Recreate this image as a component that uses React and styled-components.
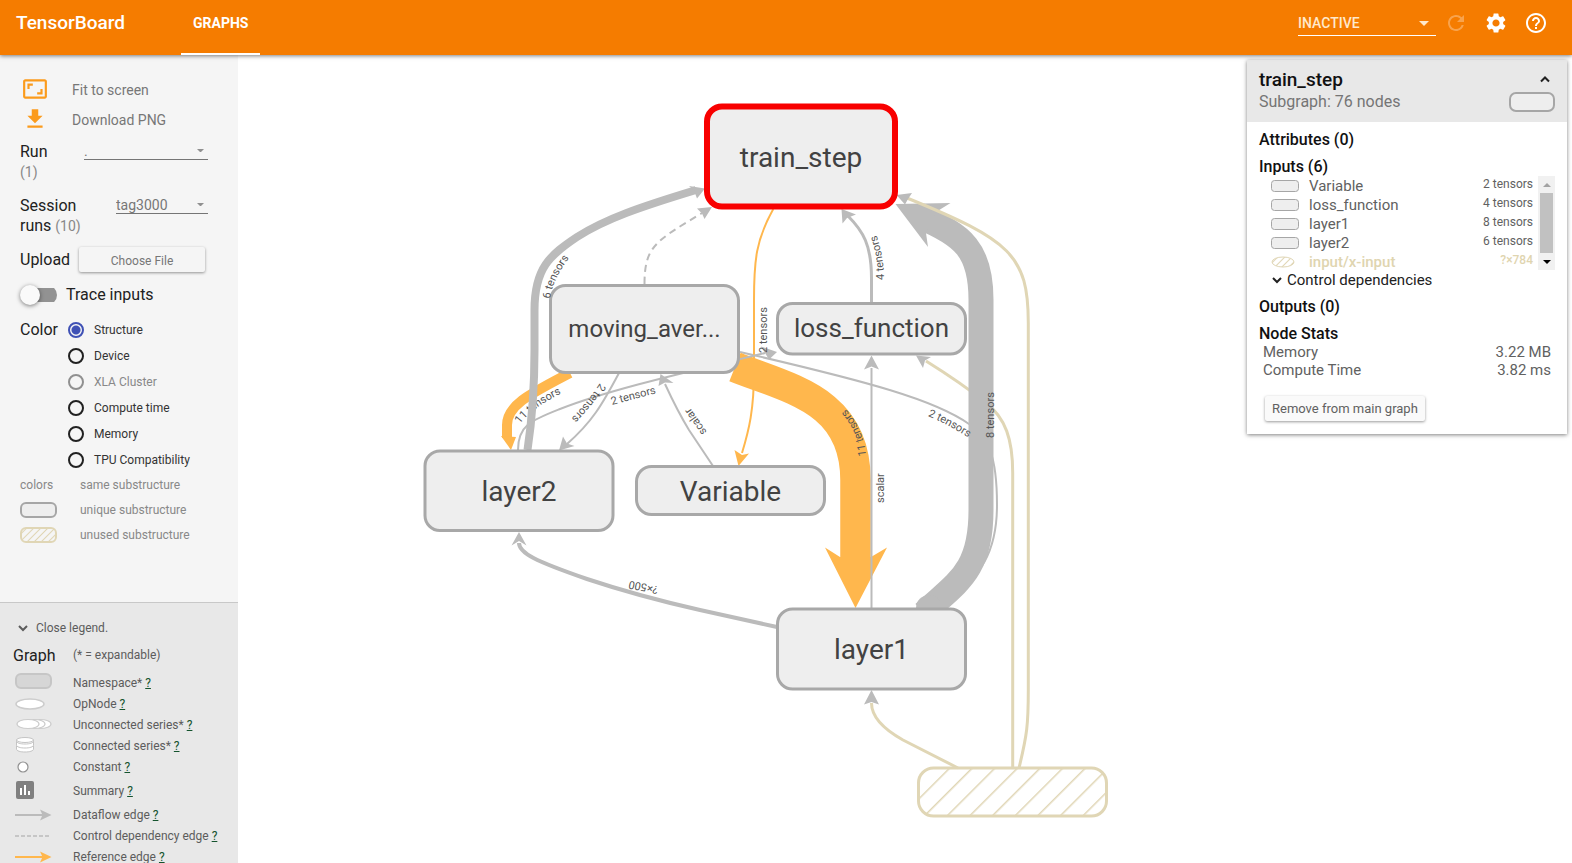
import React from "react";
import styled, { createGlobalStyle, css } from "styled-components";
import {
  MdAspectRatio,
  MdFileDownload,
  MdSettings,
  MdHelpOutline,
  MdRefresh,
} from "react-icons/md";

const GlobalStyle = createGlobalStyle`
  *, *::before, *::after { box-sizing: border-box; }
  body { margin: 0; background: #fff; }
  body, button, select, input { font-family: Roboto, "Liberation Sans", sans-serif; }
  button { border: 0; padding: 0; background: none; cursor: pointer; text-align: left; }
  h1, h2, h3, p, ul { margin: 0; padding: 0; }
  ul { list-style: none; }
`;

/* ---------- shell ---------- */

const Page = styled.div`
  display: flex;
  flex-direction: column;
  height: 100vh;
  overflow: hidden;
`;

const Toolbar = styled.header`
  position: relative;
  z-index: 2;
  flex: none;
  display: flex;
  height: 55px;
  padding: 0 24px 0 16px;
  background: #f57c00;
  color: #fff;
  box-shadow: 0 1px 4px rgba(0, 0, 0, 0.5);
`;

const Brand = styled.h1`
  width: 165px;
  font-size: 19px;
  line-height: 46px;
  font-weight: 500;
`;

const Tab = styled.button`
  padding: 0 12px 8px;
  border-bottom: 2px solid #fff;
  color: #fff;
  font-size: 14px;
  font-weight: 700;
`;

const ToolbarActions = styled.div`
  display: flex;
  align-items: flex-start;
  gap: 16px;
  margin-left: auto;
  padding-top: 11px;
`;

const IconButton = styled.button`
  display: flex;
  color: #fff;
  opacity: ${(p) => (p.disabled ? 0.3 : 1)};
`;

const SelectFrame = styled.span`
  display: grid;
  flex: ${(p) => (p.$width ? "none" : "1")};
  width: ${(p) => (p.$width ? p.$width + "px" : "auto")};
  height: ${(p) => (p.$width ? "25px" : "18px")};
  margin-right: ${(p) => (p.$width ? "-8px" : "0")};
  border-bottom: 1px solid ${(p) => p.$line};
  color: ${(p) => p.$ink};
  select, svg { grid-area: 1 / 1; }
  select {
    appearance: none;
    width: 100%;
    padding: 0;
    border: 0;
    background: none;
    color: inherit;
    font-size: 14px;
    font-weight: ${(p) => (p.$width ? 500 : 400)};
  }
  svg {
    place-self: center end;
    margin-right: ${(p) => (p.$width ? "7px" : "4px")};
    opacity: ${(p) => (p.$width ? 1 : 0.8)};
    pointer-events: none;
  }
`;

const Body = styled.div`
  flex: 1;
  min-height: 0;
  display: flex;
`;

/* ---------- sidebar ---------- */

const Sidebar = styled.aside`
  flex: none;
  display: flex;
  flex-direction: column;
  width: 238px;
  overflow: hidden;
  background: #f5f5f5;
`;

const Controls = styled.section`
  flex: none;
  padding: 20px 30px 55px 20px;
  color: #212121;
`;

const ActionButton = styled.button`
  display: grid;
  grid-template-columns: 50px 1fr;
  align-items: center;
  width: 100%;
  height: 30px;
  padding-left: 2px;
  color: #777;
  font-size: 14px;
  svg { color: #fb9b1c; margin-bottom: 2px; }
`;

const Field = styled.div`
  display: flex;
  align-items: ${(p) => (p.$center ? "center" : "flex-start")};
  margin-top: ${(p) => p.$gap}px;
`;

const FieldLabel = styled.label`
  flex: none;
  width: ${(p) => (p.$width ? p.$width + "px" : "auto")};
  font-size: 16px;
  line-height: 20px;
  small { color: #888; font-size: 14px; }
`;

const RaisedButton = styled.button`
  height: 25px;
  border-radius: 2px;
  background: ${(p) => (p.$light ? "#fafafa" : "#f5f5f5")};
  box-shadow: 0 1px 3px rgba(0, 0, 0, 0.4);
  color: ${(p) => (p.$light ? "#616161" : "#777")};
  font-size: ${(p) => (p.$light ? "13px" : "12px")};
  text-align: center;
  ${(p) => (p.$light ? css`padding: 0 7px; margin: 17px 0 0 6px;` : css`flex: 1; padding-top: 3px; margin: 0 3px 0 9px;`)}
`;

const Toggle = styled.input`
  appearance: none;
  display: flex;
  align-items: center;
  width: 37px;
  height: 20px;
  margin: 0 9px 0 0;
  background: linear-gradient(90deg, transparent 10px, #929292 10px) center / 37px 14px no-repeat;
  border-radius: 10px;
  &::before {
    content: "";
    width: 20px;
    height: 20px;
    border-radius: 50%;
    background: #fafafa;
    box-shadow: 0 1px 4px rgba(0, 0, 0, 0.5);
  }
`;

const ColorGroup = styled.fieldset`
  display: grid;
  grid-template-columns: 48px 1fr;
  margin: 12px 0 0;
  padding: 0;
  border: 0;
`;

const GroupTitle = styled.span`
  font-size: 16px;
  line-height: 26px;
`;

const RadioRow = styled.label`
  display: flex;
  align-items: center;
  gap: 10px;
  height: 26px;
  color: ${(p) => (p.$off ? "#888" : "#333")};
  font-size: 12px;
`;

const Radio = styled.input`
  appearance: none;
  width: 16px;
  height: 16px;
  margin: 0;
  border: 2px solid #212121;
  border-radius: 50%;
  &:checked { border-color: #3f51b5; background: radial-gradient(#3f51b5 4px, transparent 5px); }
  &:disabled { border-color: #909090; }
`;

const SwatchList = styled.ul`
  && { margin-top: -1px; }
`;

const SwatchRow = styled.li`
  display: grid;
  grid-template-columns: 60px 1fr;
  align-items: center;
  height: 25px;
  color: #888;
  font-size: 12px;
`;

const Legend = styled.section`
  flex: 1 0 auto;
  padding: 15px 0 0 13px;
  border-top: 1px solid #c8c8c8;
  background: #e8e8e8;
  color: #5c5c5c;
  font-size: 12px;
`;

const LegendToggle = styled.button`
  display: flex;
  align-items: center;
  gap: 8px;
  height: 20px;
  padding-left: 5px;
  color: #5c5c5c;
  font-size: 12px;
`;

const LegendHead = styled.div`
  display: grid;
  grid-template-columns: 60px 1fr;
  align-items: center;
  height: 20px;
  margin: 7px 0;
  h2 { color: #212121; font-size: 16px; font-weight: 400; }
`;

const LegendRow = styled.li`
  display: grid;
  grid-template-columns: 60px 1fr;
  align-items: center;
  height: ${(p) => (p.$tall ? 27 : 21)}px;
  a { color: #14532d; }
`;

/* ---------- canvas ---------- */

const Canvas = styled.main`
  position: relative;
  flex: 1;
  min-width: 0;
`;

const GraphSvg = styled.svg`
  display: block;
  width: 100%;
  height: 100%;
  font-family: Roboto, "Liberation Sans", sans-serif;
`;

/* ---------- info card ---------- */

const Card = styled.section`
  position: absolute;
  top: 5px;
  right: 5px;
  width: 320px;
  padding-bottom: 13px;
  background: #fff;
  box-shadow: 0 1px 4px rgba(0, 0, 0, 0.5);
`;

const CardHead = styled.header`
  display: flex;
  justify-content: space-between;
  height: 62px;
  padding: 9px 12px 0;
  background: #e8e8e8;
  h2 { font-size: 19px; line-height: 22px; font-weight: 500; color: #111; }
  p { font-size: 16px; line-height: 22px; color: #757575; }
`;

const CardAside = styled.div`
  display: flex;
  flex-direction: column;
  align-items: flex-end;
  gap: 3px;
  button { display: grid; place-items: center; width: 20px; height: 20px; color: #212121; }
`;

const CardBody = styled.div`
  padding: 7px 12px 0;
  color: #212121;
`;

const SectionTitle = styled.h3`
  margin-bottom: ${(p) => (p.$tight ? 0 : 5)}px;
  color: #111;
  font-size: 16px;
  line-height: 22px;
  font-weight: 500;
`;

const InputsArea = styled.div`
  display: flex;
  height: 94px;
  margin-top: -2px;
  overflow: hidden;
`;

const InputList = styled.ul`
  flex: 1;
`;

const InputRow = styled.li`
  display: grid;
  grid-template-columns: 38px 1fr auto;
  height: 19px;
  padding: 0 5px 0 12px;
  color: ${(p) => (p.$unused ? "#dfd5b0" : "#616161")};
  font-weight: ${(p) => (p.$unused ? 500 : 400)};
  font-size: 15px;
  line-height: 20px;
  svg { margin-top: 4px; }
  small { font-size: 12px; line-height: 16px; }
`;

const ScrollTrack = styled.div`
  display: flex;
  flex-direction: column;
  justify-content: space-between;
  width: 17px;
  background: #f1f1f1;
  button { display: grid; place-items: center; height: 17px; }
`;

const ScrollThumb = styled.div`
  flex: 1;
  margin: 0 2px;
  background: #c1c1c1;
`;

const DependenciesButton = styled.button`
  display: flex;
  align-items: center;
  gap: 5px;
  height: 20px;
  margin-bottom: 6px;
  padding-left: 13px;
  color: #212121;
  font-size: 15px;
`;

const StatTable = styled.table`
  width: 100%;
  margin-top: -2px;
  border-collapse: collapse;
  color: #616161;
  font-size: 15px;
  line-height: 18px;
  th { padding: 0 0 0 4px; font-weight: 400; text-align: left; }
  td { padding: 0 4px 0 0; text-align: right; }
`;

/* ---------- drawing pieces ---------- */

const GREY = "#bbbbbb";
const ORANGE = "#ffb74d";
const TAN = "#e0d6b5";

const Caret = ({ size = 8 }) => (
  <svg width={size} height={size / 2} viewBox="0 0 8 4" fill="currentColor">
    <path d="M0 0h8L4 4z" />
  </svg>
);

const Chevron = ({ up = false }) => (
  <svg width="10" height="8" fill="none" stroke="currentColor" strokeWidth="2">
    <path d={up ? "M1 6.500l4-4 4 4" : "M1 2l4 4 4-4"} />
  </svg>
);

const Pill = ({ w, h, sw = 2, rx = 5, unused = false }) => (
  <svg width={w} height={h}>
    <rect
      x={sw / 2}
      y={sw / 2}
      width={w - sw}
      height={h - sw}
      rx={rx}
      fill={unused ? "url(#hatchSmall)" : "#eee"}
      stroke={unused ? TAN : "#a6a6a6"}
      strokeWidth={sw}
    />
  </svg>
);

const Dropdown = ({ id, label, value, line, ink, width }) => (
  <SelectFrame $line={line} $ink={ink} $width={width}>
    <select id={id} aria-label={label} defaultValue={value}>
      <option>{value}</option>
    </select>
    <Caret size={width ? 10 : 7} />
  </SelectFrame>
);

const legendItems = [
  ["Namespace*", <rect x="3" y="2" width="35" height="14" rx="5" fill="#d6d6d6" stroke="#c6c6c6" strokeWidth="2" />],
  ["OpNode", <ellipse cx="17" cy="11" rx="14" ry="5" fill="#fff" stroke="#ccc" strokeWidth="1.5" />],
  [
    "Unconnected series*",
    <g fill="#fff" stroke="#ccc" strokeWidth="1.2">
      <ellipse cx="27" cy="10" rx="11" ry="4.5" />
      <ellipse cx="21" cy="10" rx="11" ry="4.5" />
      <ellipse cx="15" cy="10" rx="11" ry="4.5" />
    </g>,
  ],
  [
    "Connected series*",
    <g fill="#fff" stroke="#c4c4c4" strokeWidth="1">
      <path d="M3.500 14v-3h17v3c0 2-4 3-8.500 3s-8.500-1-8.500-3z" />
      <path d="M3.500 10v-4h17v4c0 2-4 3-8.500 3s-8.500-1-8.500-3z" />
      <path d="M3.500 6v-1h17v1c0 2-4 3-8.500 3s-8.500-1-8.500-3z" />
      <ellipse cx="12" cy="5" rx="8.500" ry="2.500" />
    </g>,
  ],
  ["Constant", <circle cx="10" cy="11" r="5" fill="#fff" stroke="#909090" strokeWidth="1.2" />],
  [
    "Summary",
    <g>
      <rect x="3" y="4" width="18" height="18" rx="2" fill="#808080" />
      <path d="M7 11h2v7H7zM11 8h2v10h-2zM15 14h2v4h-2z" fill="#fff" />
    </g>,
    true,
  ],
  [
    "Dataflow edge",
    <g>
      <path d="M2 11h28" stroke={GREY} strokeWidth="2" />
      <path d="M27 5.500 38.500 11 27 16.500l2.500-5.500z" fill={GREY} />
    </g>,
  ],
  ["Control dependency edge", <path d="M2 11h36" stroke={GREY} strokeWidth="1.300" strokeDasharray="4 2" />],
  [
    "Reference edge",
    <g>
      <path d="M2 11h28" stroke={ORANGE} strokeWidth="2" />
      <path d="M27 5.500 38.500 11 27 16.500l2.500-5.500z" fill={ORANGE} />
    </g>,
  ],
];

const colorModes = ["Structure", "Device", "XLA Cluster", "Compute time", "Memory", "TPU Compatibility"];

const inputs = [
  ["Variable", "2 tensors"],
  ["loss_function", "4 tensors"],
  ["layer1", "8 tensors"],
  ["layer2", "6 tensors"],
  ["input/x-input", "?×784"],
];

/* Edges are listed back to front: [path, colour, width, arrow head, head colour, dash] */
const edges = [
  ["M1012.700 768V473C1012.700 440 1006 418 985 402C970 390 950 376 926 361", TAN, 3, "916,355.500 923,368 925,360.500 931,357", GREY],
  ["M946 606C975 577 997 560 997 505C997 455 988 436 969 424C935 400 870 382 740 352", GREY, 2],
  ["M570 373C530 394 507 405 507 425V438", ORANGE, 10, "511,450 501,436 516,437", ORANGE],
  ["M773.300 209C756 240 754 260 754 300V370C754 410 749 430 742 453", ORANGE, 2, "738.500,466 734.500,450 742,455 749,453.500", ORANGE],
  ["M735 367C790 389 855.500 400 855.500 480V565", ORANGE, 30.500, "855.500,608 825,547.500 840,557 871,557 887,547.500", ORANGE],
  ["M518 450C518 425 532 420 560 409C610 389 700 369 765 353", GREY, 2, "777,352 761,346.500 765,353 769,359.500", GREY],
  ["M871.500 609V368", GREY, 2, "871.500,355.500 864,369.500 871.500,366.500 879,369.500", GREY],
  ["M871.500 303V278C871.500 245 863 231 848 216", GREY, 3, "841.500,209 842.500,223.500 847,218 856,214.500", GREY],
  ["M644.500 284C644.500 246 656 241 702 213", GREY, 2, "712,207 697,208.500 702,213.500 704.500,219", GREY, "7 5"],
  ["M619 373C602 405 592 422 567 444", GREY, 2, "559,450.500 563,436.500 567,443.500 574.500,446", GREY],
  ["M713 466L689 430C678 412 671 397 665 384", GREY, 2, "660.500,374 658.500,386 665,382.500 673.500,383", GREY],
  ["M777 627L700 610C660 601 620 590 587 579C535 561 519 553 519 543", GREY, 4, "519,532 511.500,545.500 519,541 526.500,545.500", GREY],
  ["M924 613C957 582 981 572 981 510V300C981 250 963 235 920 217", GREY, 25, "895.500,204 950.500,203 936,212 926,233 928,247", GREY],
  ["M527.500 450C532 420 534.500 390 534.500 350V310C534.500 268 550 255 577 237C605 219 640 207 696 190", GREY, 8, "705,188.500 689,186 694,190.500 697,198.500", GREY],
  ["M958 768L903 740C878 726 871.500 714 871.500 703", TAN, 3, "871.500,690 864,704.500 871.500,702 879,704.500", GREY],
  ["M1019 768C1027 735 1028.300 725 1028.300 690V323C1028.300 255 1010 240 907 198", TAN, 3, "896.500,195 912,193 908,199 905,204.500", GREY],
];

const edgeLabels = [
  ["6 tensors", "M550 299Q552 281 569 258"],
  ["4 tensors", "M884 280C884 262 881 246 873 226"],
  ["2 tensors", "M767 353V290"],
  ["2 tensors", "M600 383Q588 402 566 424"],
  ["2 tensors", "M612 405L672 389"],
  ["11 tensors", "M520 424Q530 409 564 392"],
  ["scalar", "M707 432L682 396"],
  ["?×500", "M658.500 586.500L616 578"],
  ["11 tensors", "M866 456Q864 422 832 396"],
  ["scalar", "M884 503V463"],
  ["2 tensors", "M928 416Q950 425 982 446"],
  ["8 tensors", "M994 438V380"],
];

/* [label, x, y, height, font size] */
const nodes = [
  ["train_step", 707, 106.5, 100, 28],
  ["moving_aver...", 550.5, 285.5, 87, 24],
  ["loss_function", 777.5, 303.5, 50.5, 26],
  ["layer2", 425, 451, 79.5, 28],
  ["Variable", 636.5, 466.5, 48, 28],
  ["layer1", 777.5, 609, 80, 28],
];

const backLabels = 5;

const EdgeLabel = ({ index }) => (
  <>
    <path id={"edge-label-" + index} d={edgeLabels[index][1]} fill="none" />
    <text fontSize="11" fill="#555">
      <textPath href={"#edge-label-" + index}>{edgeLabels[index][0]}</textPath>
    </text>
  </>
);

const Edge = ({ data }) => {
  const [d, color, width, head, headColor, dash] = data;
  return (
    <g>
      <path d={d} fill="none" stroke={color} strokeWidth={width} strokeDasharray={dash} />
      {head && <polygon points={head} fill={headColor} />}
    </g>
  );
};

const Graph = () => (
  <GraphSvg viewBox="238 55 1334 808" role="img" aria-label="Computation graph">
    <defs>
      <pattern id="hatch" width="16" height="16" patternUnits="userSpaceOnUse" patternTransform="translate(926 768) rotate(45)">
        <path d="M0 0V16" stroke={TAN} strokeWidth="3" />
      </pattern>
      <pattern id="hatchSmall" width="5" height="5" patternUnits="userSpaceOnUse" patternTransform="rotate(45)">
        <path d="M0 0V5" stroke={TAN} strokeWidth="2" />
      </pattern>
    </defs>
    {edges.slice(0, 3).map((e) => <Edge key={e[0]} data={e} />)}
    <EdgeLabel index={backLabels} />
    {edges.slice(3).map((e) => <Edge key={e[0]} data={e} />)}
    <circle cx="929" cy="608" r="13" fill={GREY} />
    {nodes.map(([name, x, y, h, size], i) => (
      <g key={name}>
        <rect x={x} y={y} width="188" height={h} rx="15" fill="#eee" stroke={i ? "#a8a8a8" : "#f80000"} strokeWidth={i ? 3 : 6} />
        <text x={x + 94} y={y + h / 2 + (size < 28 ? 8 : 10)} fontSize={size} fill="#424242" textAnchor="middle">{name}</text>
      </g>
    ))}
    <rect x="918.500" y="768" width="188" height="48" rx="15" fill="url(#hatch)" stroke={TAN} strokeWidth="3" />
    {edgeLabels.map((l, i) => (i === backLabels ? null : <EdgeLabel key={l[1]} index={i} />))}
  </GraphSvg>
);

const InfoCard = () => (
  <Card>
    <CardHead>
      <div>
        <h2>train_step</h2>
        <p>Subgraph: 76 nodes</p>
      </div>
      <CardAside>
        <button aria-label="Collapse"><Chevron up /></button>
        <Pill w={46} h={20} sw={2} rx={6} />
      </CardAside>
    </CardHead>
    <CardBody>
      <SectionTitle>Attributes (0)</SectionTitle>
      <SectionTitle $tight>Inputs (6)</SectionTitle>
      <InputsArea>
        <InputList>
          {inputs.map(([name, size], i) => (
            <InputRow key={name} $unused={i === 4}>
              {i === 4 ? (
                <svg width="24" height="12">
                  <ellipse cx="12" cy="6" rx="11" ry="5" fill="url(#hatchSmall)" stroke={TAN} strokeWidth="1" />
                </svg>
              ) : (
                <Pill w={28} h={12} sw={1} rx={3} />
              )}
              <span>{name}</span>
              <small>{size}</small>
            </InputRow>
          ))}
        </InputList>
        <ScrollTrack>
          <button aria-label="Scroll up">
            <svg width="8" height="4" viewBox="0 0 8 4" fill="#a3a3a3"><path d="M0 4h8L4 0z" /></svg>
          </button>
          <ScrollThumb />
          <button aria-label="Scroll down"><Caret /></button>
        </ScrollTrack>
      </InputsArea>
      <DependenciesButton><Chevron />Control dependencies</DependenciesButton>
      <SectionTitle>Outputs (0)</SectionTitle>
      <SectionTitle $tight>Node Stats</SectionTitle>
      <StatTable>
        <tbody>
          <tr><th scope="row">Memory</th><td>3.22 MB</td></tr>
          <tr><th scope="row">Compute Time</th><td>3.82 ms</td></tr>
        </tbody>
      </StatTable>
      <RaisedButton $light>Remove from main graph</RaisedButton>
    </CardBody>
  </Card>
);

const SidePanel = () => (
  <Sidebar>
    <Controls>
      <ActionButton><MdAspectRatio size={26} />Fit to screen</ActionButton>
      <ActionButton><MdFileDownload size={26} />Download PNG</ActionButton>
      <Field $gap={7}>
        <FieldLabel htmlFor="run" $width={64}>Run<br /><small>(1)</small></FieldLabel>
        <Dropdown id="run" value="." line="#757575" ink="#777" />
      </Field>
      <Field $gap={14}>
        <FieldLabel htmlFor="session" $width={96}>Session<br />runs <small>(10)</small></FieldLabel>
        <Dropdown id="session" value="tag3000" line="#757575" ink="#777" />
      </Field>
      <Field $gap={11} $center>
        <FieldLabel as="span">Upload</FieldLabel>
        <RaisedButton>Choose File</RaisedButton>
      </Field>
      <Field $gap={13} $center>
        <Toggle type="checkbox" id="trace" />
        <FieldLabel htmlFor="trace">Trace inputs</FieldLabel>
      </Field>
      <ColorGroup>
        <GroupTitle>Color</GroupTitle>
        <div>
          {colorModes.map((mode, i) => (
            <RadioRow key={mode} $off={i === 2}>
              <Radio type="radio" name="color" defaultChecked={i === 0} disabled={i === 2} />
              {mode}
            </RadioRow>
          ))}
        </div>
      </ColorGroup>
      <SwatchList>
        <SwatchRow><span>colors</span><span>same substructure</span></SwatchRow>
        <SwatchRow><Pill w={37} h={16} /><span>unique substructure</span></SwatchRow>
        <SwatchRow><Pill w={37} h={16} unused /><span>unused substructure</span></SwatchRow>
      </SwatchList>
    </Controls>
    <Legend>
      <LegendToggle><Chevron />Close legend.</LegendToggle>
      <LegendHead><h2>Graph</h2><span>(* = expandable)</span></LegendHead>
      <ul>
        {legendItems.map(([name, art, tall]) => (
          <LegendRow key={name} $tall={tall}>
            <svg width="48" height={tall ? 27 : 21}>{art}</svg>
            <span>{name} <a href="#help">?</a></span>
          </LegendRow>
        ))}
      </ul>
    </Legend>
  </Sidebar>
);

export default function App() {
  return (
    <Page>
      <GlobalStyle />
      <Toolbar>
        <Brand>TensorBoard</Brand>
        <Tab>GRAPHS</Tab>
        <ToolbarActions>
          <Dropdown id="plugin" label="Inactive plugins" value="INACTIVE" line="#fff" ink="#ffe9cc" width={138} />
          <IconButton disabled aria-label="Reload"><MdRefresh size={24} /></IconButton>
          <IconButton aria-label="Settings"><MdSettings size={24} /></IconButton>
          <IconButton aria-label="Help"><MdHelpOutline size={24} /></IconButton>
        </ToolbarActions>
      </Toolbar>
      <Body>
        <SidePanel />
        <Canvas>
          <Graph />
          <InfoCard />
        </Canvas>
      </Body>
    </Page>
  );
}
